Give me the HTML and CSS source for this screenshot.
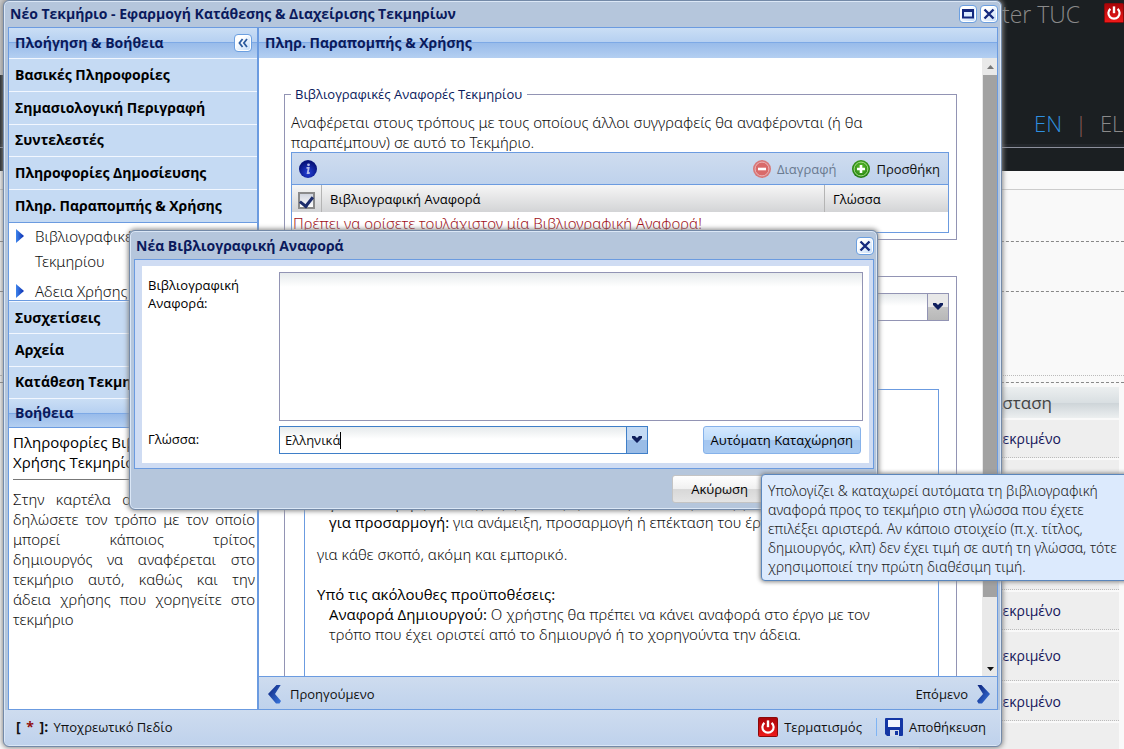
FILE: index.html
```html
<!DOCTYPE html>
<html lang="el">
<head>
<meta charset="utf-8">
<title>Νέο Τεκμήριο - Εφαρμογή Κατάθεσης &amp; Διαχείρισης Τεκμηρίων</title>
<link rel="stylesheet" href="styles.css">
</head>
<body>
<svg width="0" height="0" class="defs" aria-hidden="true">
  <defs>
    <linearGradient id="g-blue" x1="0" y1="0" x2="1" y2="1"><stop offset="0" stop-color="#0a1f78"/><stop offset="1" stop-color="#3a78e0"/></linearGradient>
    <linearGradient id="g-red" x1="0" y1="0" x2="0" y2="1"><stop offset="0" stop-color="#a80408"/><stop offset="1" stop-color="#f01a1a"/></linearGradient>
    <radialGradient id="g-info" cx=".5" cy=".7" r=".6"><stop offset="0" stop-color="#2440d8"/><stop offset="1" stop-color="#06127a"/></radialGradient>
    <radialGradient id="g-green" cx=".5" cy=".4" r=".6"><stop offset="0" stop-color="#5cc02c"/><stop offset="1" stop-color="#1f7a10"/></radialGradient>
    <linearGradient id="g-tri" x1="0" y1="0" x2="1" y2="0"><stop offset="0" stop-color="#3f86ec"/><stop offset="1" stop-color="#0a2cb0"/></linearGradient>
  </defs>
  <symbol id="i-power" viewBox="0 0 20 20">
    <rect x=".5" y=".5" width="19" height="19" rx="1" fill="url(#g-red)" stroke="#8a0a0a"/>
    <path d="M6.4 5.8a5.6 5.6 0 1 0 7.2 0" fill="none" stroke="#fff" stroke-width="2.2"/>
    <path d="M10 3.4v6.8" stroke="#fff" stroke-width="2.4"/>
  </symbol>
  <symbol id="i-close" viewBox="0 0 16 16">
    <path d="M3.500 3.500l9 9M12.500 3.500l-9 9" stroke="#15297e" stroke-width="2.4"/>
  </symbol>
  <symbol id="i-tri" viewBox="0 0 8 14"><path d="M0 0l8 7-8 7z" fill="url(#g-tri)"/></symbol>
  <symbol id="i-down" viewBox="0 0 12 8"><path d="M1 0h3l2 2 2-2h3v2L6 7 1 2z" fill="#10205e"/></symbol>
</svg>

<div class="page">
  <header class="site-head">
    <div class="site-brand"></div>
    <div class="site-tools">
      <div class="site-user"><span>ter TUC</span><svg class="ic20" role="img" aria-label="Έξοδος"><use href="#i-power"/></svg></div>
      <nav class="site-lang"><a href="#en" class="on">EN</a><i>|</i><a href="#el">EL</a></nav>
    </div>
  </header>
  <div class="site-sub"></div>
  <div class="site-filter"></div>
  <div class="site-band"></div>
  <div class="site-gap"></div>
  <table class="site-table">
    <thead><tr><th>Κατάσταση</th></tr></thead>
    <tbody>
      <tr><td>Εγκεκριμένο</td></tr>
      <tr class="mid"><td>Εγκεκριμένο</td></tr>
      <tr class="mid"><td>Εγκεκριμένο</td></tr>
      <tr class="mid"><td>Εγκεκριμένο</td></tr>
      <tr><td>Εγκεκριμένο</td></tr>
      <tr class="tall"><td>Εγκεκριμένο</td></tr>
      <tr><td>Εγκεκριμένο</td></tr>
      <tr><td></td></tr>
    </tbody>
  </table>
</div>

<section class="win main-win">
  <div class="win-title">
    <h1>Νέο Τεκμήριο - Εφαρμογή Κατάθεσης &amp; Διαχείρισης Τεκμηρίων</h1>
    <button class="tool" aria-label="Μεγιστοποίηση"><svg viewBox="0 0 16 16"><path d="M3 4.500h10v7H3z" fill="#dcecff" stroke="#15297e" stroke-width="2"/><path d="M2 4.500h12" stroke="#15297e" stroke-width="3"/></svg></button>
    <button class="tool" aria-label="Κλείσιμο"><svg><use href="#i-close"/></svg></button>
  </div>
  <div class="win-body">
    <aside class="side">
      <div class="bar"><h2>Πλοήγηση &amp; Βοήθεια</h2><button class="tool" aria-label="Σύμπτυξη"><svg viewBox="0 0 18 18"><path d="M8.500 4.500L5 9l3.500 4.500M13.500 4.500L10 9l3.500 4.500" fill="none" stroke="#2a5a9e" stroke-width="2"/></svg></button></div>
      <div class="accs">
        <button class="acc">Βασικές Πληροφορίες</button>
        <button class="acc">Σημασιολογική Περιγραφή</button>
        <button class="acc">Συντελεστές</button>
        <button class="acc">Πληροφορίες Δημοσίευσης</button>
        <button class="acc">Πληρ. Παραπομπής &amp; Χρήσης</button>
      </div>
      <ul class="sub">
        <li><svg><use href="#i-tri"/></svg><a href="#refs">Βιβλιογραφικές Τεκμηρίου</a></li>
        <li><svg><use href="#i-tri"/></svg><a href="#lic">Αδεια Χρήσης</a></li>
      </ul>
      <div class="accs short">
        <button class="acc">Συσχετίσεις</button>
        <button class="acc">Αρχεία</button>
        <button class="acc">Κατάθεση Τεκμηρίου</button>
      </div>
      <div class="bar help-bar"><h2>Βοήθεια</h2></div>
      <div class="help">
        <h3>Πληροφορίες Βιβλιογραφίας &amp;<br>Χρήσης Τεκμηρίου</h3>
        <hr>
        <p>Στην καρτέλα αυτή μπορείτε να<br>δηλώσετε τον τρόπο με τον οποίο<br>μπορεί κάποιος τρίτος<br>δημιουργός να αναφέρεται στο<br>τεκμήριο αυτό, καθώς και την<br>άδεια χρήσης που χορηγείτε στο</p>
        <p class="last">τεκμήριο</p>
      </div>
    </aside>
    <main class="main">
      <div class="bar"><h2>Πληρ. Παραπομπής &amp; Χρήσης</h2></div>
      <div class="scroll">
        <div class="form">
          <fieldset class="set">
            <legend>Βιβλιογραφικές Αναφορές Τεκμηρίου</legend>
            <p>Αναφέρεται στους τρόπους με τους οποίους άλλοι συγγραφείς θα αναφέρονται (ή θα παραπέμπουν) σε αυτό το Τεκμήριο.</p>
            <div class="grid">
              <div class="grid-bar">
                <svg class="ic18" viewBox="0 0 18 18" role="img" aria-label="Πληροφορίες"><circle cx="9" cy="9" r="9" fill="url(#g-info)"/><circle cx="9.500" cy="4.800" r="1.400" fill="#b4bce8"/><path d="M7.500 7.800h2.200l-1 5.200h2" fill="none" stroke="#b4bce8" stroke-width="1.800"/></svg>
                <span class="grow"></span>
                <button class="tb" disabled><svg class="ic18" viewBox="0 0 18 18"><circle cx="9" cy="9" r="9" fill="#d87878"/><circle cx="9" cy="9" r="6.900" fill="#d96a6a" stroke="#eab4b8"/><path d="M5 9h8" stroke="#fff" stroke-width="2.600"/></svg>Διαγραφή</button>
                <button class="tb"><svg class="ic18" viewBox="0 0 18 18"><circle cx="9" cy="9" r="9" fill="url(#g-green)"/><circle cx="9" cy="9" r="6.900" fill="none" stroke="#a6dc86"/><path d="M5 9h8M9 5v8" stroke="#fff" stroke-width="2.600"/></svg>Προσθήκη</button>
              </div>
              <table>
                <thead><tr><th class="ck"><input type="checkbox" checked aria-label="Επιλογή όλων"></th><th>Βιβλιογραφική Αναφορά</th><th class="lg">Γλώσσα</th></tr></thead>
                <tbody><tr><td colspan="3">Πρέπει να ορίσετε τουλάχιστον μία Βιβλιογραφική Αναφορά!</td></tr></tbody>
              </table>
            </div>
          </fieldset>
          <fieldset class="set lic">
            <div class="combo grey"><input type="text" aria-label="Άδεια"><button aria-label="Επιλογή άδειας"><svg><use href="#i-down"/></svg></button></div>
            <div class="terms">
              <dl><dt>για διανομή:</dt> <dd>για αντιγραφή, διανομή και παρουσίαση του έργου</dd></dl>
              <dl><dt>για προσαρμογή:</dt> <dd>για ανάμειξη, προσαρμογή ή επέκταση του έργου</dd></dl>
              <p>για κάθε σκοπό, ακόμη και εμπορικό.</p>
              <h4>Υπό τις ακόλουθες προϋποθέσεις:</h4>
              <dl><dt>Αναφορά Δημιουργού:</dt> <dd>Ο χρήστης θα πρέπει να κάνει αναφορά στο έργο με τον τρόπο που έχει οριστεί από το δημιουργό ή το χορηγούντα την άδεια.</dd></dl>
            </div>
          </fieldset>
        </div>
        <div class="sbar"><svg viewBox="0 0 7 4"><path d="M0 4L3.500 0 7 4z" fill="#777"/></svg><div class="thumb"></div><svg viewBox="0 0 7 4"><path d="M0 0h7L3.500 4z" fill="#111"/></svg></div>
      </div>
      <div class="pager">
        <button class="tb"><svg class="chev" viewBox="0 0 13 20"><path d="M8.500 1h4.200L7 10l6 7-1.500 2.500H8L0 10z" fill="url(#g-blue)"/></svg>Προηγούμενο</button>
        <button class="tb">Επόμενο<svg class="chev" viewBox="0 0 13 20"><path d="M4.500 1H.5L6 10 0 17l1.500 2.500H5L13 10z" fill="url(#g-blue)"/></svg></button>
      </div>
    </main>
  </div>
  <footer class="win-foot">
    <span class="req"><b>[ <em>*</em> ]:</b> Υποχρεωτικό Πεδίο</span>
    <button class="tb"><svg class="ic20"><use href="#i-power"/></svg>Τερματισμός</button>
    <i class="sep"></i>
    <button class="tb"><svg class="ic18" viewBox="0 0 18 18"><path d="M0 1q0-1 1-1h16q1 0 1 1v16q0 1-1 1H2l-2-2z" fill="#1436a4"/><path d="M3 2h12v7H3z" fill="#f2f6ff"/><path d="M5 12h9v6H5z" fill="#d4dcec"/><path d="M10 13h3v4h-3z" fill="#1436a4"/></svg>Αποθήκευση</button>
  </footer>
</section>

<section class="win dialog" role="dialog" aria-labelledby="dlg-t">
  <div class="win-title"><h2 id="dlg-t">Νέα Βιβλιογραφική Αναφορά</h2><button class="tool" aria-label="Κλείσιμο"><svg><use href="#i-close"/></svg></button></div>
  <div class="dlg-body">
    <div class="dlg-form">
      <label for="ref">Βιβλιογραφική Αναφορά:</label>
      <textarea id="ref"></textarea>
      <label for="lang" class="one">Γλώσσα:</label>
      <div class="row">
        <div class="combo focus"><input id="lang" type="text" value="Ελληνικά"><span class="caret"></span><button aria-label="Επιλογή γλώσσας"><svg><use href="#i-down"/></svg></button></div>
        <button class="btn blue">Αυτόματη Καταχώρηση</button>
      </div>
    </div>
  </div>
  <div class="dlg-foot"><button class="btn">Ακύρωση</button></div>
</section>

<div class="tip" role="tooltip">Υπολογίζει &amp; καταχωρεί αυτόματα τη βιβλιογραφική<br>αναφορά προς το τεκμήριο στη γλώσσα που έχετε<br>επιλέξει αριστερά. Αν κάποιο στοιχείο (π.χ. τίτλος,<br>δημιουργός, κλπ) δεν έχει τιμή σε αυτή τη γλώσσα, τότε<br>χρησιμοποιεί την πρώτη διαθέσιμη τιμή.</div>
</body>
</html>
```

FILE: styles.css
```css
* { box-sizing: border-box; }
html, body { height: 100%; }
body {
  margin: 0;
  overflow: hidden;
  position: relative;
  background: #f9f9f9;
  font: 13px/20px "Open Sans", "Noto Sans", sans-serif;
  color: #111;
}
h1, h2, h3, h4, p, dl, dd, ul { margin: 0; padding: 0; }
button, input, textarea { font: inherit; color: inherit; }
button { cursor: pointer; padding: 0; border: 0; background: none; }
a { color: inherit; text-decoration: none; }
.defs { position: absolute; }
.ic18 { width: 18px; height: 18px; flex: none; }
.ic20 { width: 20px; height: 20px; flex: none; }

/* page behind the windows */
.site-head {
  display: flex;
  justify-content: space-between;
  height: 171px;
  background: linear-gradient(#1b1f22 144px, #23272c 144px, #23272c 147px, #8c8f9c 147px, #8c8f9c 148px, #1b1f22 148px);
}
.site-brand { width: 60px; height: 75px; background: #c9c9c9; }
.site-tools { width: 122px; font-size: 23px; line-height: 28px; font-weight: 300; color: #8a8a8a; white-space: nowrap; }
.site-user { display: flex; gap: 24px; }
.site-user .ic20 { margin-top: 3px; }
.site-lang { display: flex; gap: 13px; padding: 81px 0 0 32px; font-size: 22px; }
.site-lang i { font-style: normal; color: #8f5f5a; }
.site-lang .on { color: #2f8fdf; }
.site-sub { height: 19px; border-bottom: 1px solid #ccc; }
.site-filter { height: 52px; border-bottom: 1px dashed #888; }
.site-band { height: 50px; border-bottom: 1px dashed #888; }
.site-gap { height: 91px; border-bottom: 1px dashed #888; }
.site-gap::before { content: ""; display: block; height: 83px; border-bottom: 1px dotted #bbb; }
.site-table { width: 200px; margin: 2px 5px 0 auto; border-spacing: 0 2px; }
.site-table th, .site-table td { padding: 0 58px 0 0; text-align: right; font-size: 14px; }
.site-table th { height: 31px; padding-right: 67px; font-size: 17px; font-weight: 400; color: #444; background: linear-gradient(#eceff0, #d9dfe2 50%, #cdd4d8 51%, #eceff0); }
.site-table td { height: 38px; background: #eee; border-bottom: 1px dotted #bbb; color: #14145a; }
.site-table .mid td { height: 42px; }
.site-table .tall td { height: 49px; }

/* windows */
.win {
  position: absolute;
  display: flex;
  flex-direction: column;
  border: 1px solid #748aa8;
  border-radius: 6px;
  background: #b5c6dc;
  box-shadow: inset 0 0 0 1px #dbe7f6, 0 0 5px 1px #888;
}
.main-win { left: 3px; right: 122px; top: 0; bottom: 2px; padding: 0 3px 0 4px; }
.win-title { display: flex; align-items: center; gap: 3px; height: 26px; flex: none; }
.win-title h1, .win-title h2 { flex: 1; padding-left: 2px; font-size: 14px; line-height: 20px; font-weight: 700; color: #0a1a5c; white-space: nowrap; }
.tool { width: 18px; height: 18px; flex: none; border: 1px solid #6b9fe0; border-radius: 4px; background: linear-gradient(135deg, #fff 30%, #bdd8f8); box-shadow: inset 0 0 0 1px #fff; }
.tool svg { display: block; width: 16px; height: 16px; }
.win-body { flex: 1; min-height: 0; display: flex; border: 1px solid #6b9be0; background: #fff; }
.bar {
  display: flex;
  align-items: center;
  justify-content: space-between;
  height: 30px;
  flex: none;
  padding: 0 5px 0 6px;
  background: linear-gradient(#cadef5, #b6d0f1 14px, #7da9e6 14px, #7da9e6 15px, #98bbea 15px, #b4cff1);
}
.bar h2 { font-size: 14px; line-height: 20px; font-weight: 700; color: #0a1a5c; }
.side { width: 250px; flex: none; display: flex; flex-direction: column; border-right: 2px solid #6b9be0; }
.accs { display: flex; flex-direction: column; height: 164px; flex: none; }
.accs.short { height: 97px; }
.acc { flex: 1; padding: 0 6px; text-align: left; font-size: 14px; font-weight: 700; color: #000; border-top: 1px solid #f2f7ff; background: #c5daf3; white-space: nowrap; }
.sub { list-style: none; height: 79px; flex: none; overflow: hidden; border-top: 1px solid #6b9be0; border-bottom: 1px solid #6b9be0; font: 300 15px/25px "Noto Sans", "Open Sans", sans-serif; padding-top: 1px; }
.sub li { display: flex; gap: 11px; padding: 0 60px 5px 7px; }
.sub svg { width: 8px; height: 14px; flex: none; margin-top: 5px; }
.help-bar { border-top: 1px solid #f2f7ff; border-bottom: 1px solid #6b9be0; }
.help { padding: 4px 2px 5px 4px; font-size: 15px; }
.help h3 { font-size: 15px; font-weight: 400; color: #000; white-space: nowrap; }
.help hr { margin: 7px 0 9px; border: 0; border-top: 1px solid #777; }
.help p { font-family: "Noto Sans", "Open Sans", sans-serif; font-weight: 300; text-align: justify; text-align-last: justify; }
.help .last { text-align-last: left; }

.main { flex: 1; min-width: 0; display: flex; flex-direction: column; }
.scroll { flex: 1; min-height: 0; display: flex; overflow: hidden; }
.form { flex: 1; padding: 26px 25px 0 25px; height: 619px; overflow: hidden; }
.set { margin: 0 0 36px; padding: 8px 7px 6px 6px; border: 1px solid #9294b4; }
.set legend { padding: 0 5px 0 4px; color: #0a1a5c; line-height: 20px; }
.set > p { font: 300 15px/20px "Noto Sans", "Open Sans", sans-serif; }
.grid { border: 1px solid #6b9be0; }
.grid-bar { display: flex; align-items: center; gap: 16px; height: 32px; padding: 0 8px 0 7px; border-bottom: 1px solid #6b9be0; background: linear-gradient(#cedcef, #bfd2ec); }
.grow { flex: 1; }
.tb { display: flex; align-items: center; gap: 6px; white-space: nowrap; }
.tb:disabled { color: #6a7a90; }
.grid table { width: 100%; border-spacing: 0; table-layout: fixed; }
.grid th { height: 27px; padding: 0 8px; text-align: left; font-weight: 400; color: #000; background: linear-gradient(#f6f6f6, #d3d4d6); border-right: 1px solid #b4b4b4; }
.grid th:last-child { border-right: 0; }
.grid .ck { width: 30px; padding: 0; text-align: center; }
.grid .lg { width: 123px; }
.grid input { appearance: none; width: 17px; height: 17px; margin: 0; vertical-align: middle; border: 2px solid #8a8a8a; background: linear-gradient(#d0d4de, #fff); display: inline-flex; justify-content: center; }
.grid input::after { content: ""; width: 6px; height: 10px; border: solid #1c2c6c; border-width: 0 3px 3px 0; transform: rotate(38deg); }
.grid td { height: 20px; padding: 2px 1px 0; font: 300 15px/18px "Noto Sans", "Open Sans", sans-serif; color: #a01018; }
.lic { height: 900px; padding: 16px 7px 0 19px; }
.combo { display: flex; position: relative; height: 28px; }
.combo input { flex: 1; min-width: 0; padding: 0 5px; border: 1px solid #9294b4; border-right: 0; background: linear-gradient(#e6eaec, #fff 12px); outline: 0; }
.combo button { width: 22px; border: 1px solid #9294b4; background: linear-gradient(#e8e8e8 48%, #c4c4c4 52%, #b8b8b8); }
.combo svg { display: block; width: 12px; height: 8px; margin: 0 auto; }
.combo.focus { width: 369px; }
.combo.focus input { border-color: #3f7fc8; }
.combo.focus button { border-color: #3f7fc8; background: linear-gradient(#c4daf4 48%, #9abce6 52%, #9abce6); }
.caret { position: absolute; left: 61px; top: 6px; width: 1px; height: 17px; background: #000; }
.terms { margin: 68px 10px 0 0; height: 800px; padding: 102px 40px 0 12px; border: 1px solid #6b9be0; font: 300 15px/20px "Noto Sans", "Open Sans", sans-serif; }
.terms dl { padding-left: 12px; }
.terms dt, .terms dd { display: inline; }
.terms dt, .terms h4 { font: 400 15px/20px "Open Sans", "Noto Sans", sans-serif; color: #000; }
.terms p { margin: 12px 0 20px; }
.sbar { width: 15px; flex: none; display: flex; flex-direction: column; align-items: center; justify-content: space-between; padding: 7px 0 5px 1px; background: #e9e9e9; }
.sbar svg { width: 7px; height: 4px; flex: none; }
.thumb { width: 14px; height: 522px; margin: 6px 0 auto; background: #a2a2a2; }
.pager { display: flex; justify-content: space-between; align-items: center; height: 33px; flex: none; padding: 2px 7px 0 9px; border-top: 1px solid #6b9be0; background: linear-gradient(#cedcef, #bfd2ec); }
.chev { width: 13px; height: 20px; }
.pager .tb { gap: 9px; }
.win-foot { display: flex; align-items: center; gap: 14px; height: 35px; flex: none; margin: 0 -2px 1px -3px; padding: 0 14px 1px 11px; border-radius: 0 0 4px 4px; background: linear-gradient(#cedcef, #bfd2ec); }
.req { flex: 1; }
.req b { font-size: 14px; margin-right: 2px; }
.req em { padding: 0 2px; font-style: normal; color: #901010; }
.sep { width: 1px; height: 18px; background: #7fb4f4; margin-right: -6px; }

/* dialog */
.dialog { left: 129px; right: 246px; top: 230px; padding: 0 3px 0 4px; }
.dialog .win-title { height: 28px; padding: 2px 0 0; }
.dlg-body { padding: 6px 4px 5px 7px; border: 1px solid #6b9be0; background: #cfdcf3; }
.dlg-form { display: grid; grid-template-columns: 125px 1fr; column-gap: 6px; row-gap: 5px; padding: 6px 6px 9px; background: #fff; }
.dlg-form label { padding-top: 4px; line-height: 18px; color: #000; }
.dlg-form textarea { display: block; width: 100%; height: 149px; border: 1px solid #9294b4; resize: none; background: linear-gradient(#e6eaec, #fff 14px); outline: 0; }
.row { display: flex; justify-content: space-between; padding-right: 2px; }
.dlg-foot { display: flex; justify-content: flex-end; height: 40px; padding: 6px 107px 6px 0; }
.btn { height: 28px; padding: 0 18px; border: 1px solid #c4c4c4; border-radius: 3px; background: linear-gradient(#fff, #f0f0f0 50%, #d8d8d8 52%, #e4e4e4); color: #000; white-space: nowrap; }
.btn.blue { padding: 0 7px; border-color: #86b2ea; background: linear-gradient(#d4e8fe, #bedcfa 50%, #a4c6f0 52%, #a8caf2); }

.tip {
  position: absolute;
  left: 761px;
  top: 474px;
  padding: 6px 12px 4px 6px;
  border: 1px solid #5a86bc;
  border-radius: 4px;
  background: #dceafd;
  box-shadow: 0 0 4px 1px #888;
  font: 300 14px/19px "Noto Sans", "Open Sans", sans-serif;
  color: #222;
  white-space: nowrap;
}
```
